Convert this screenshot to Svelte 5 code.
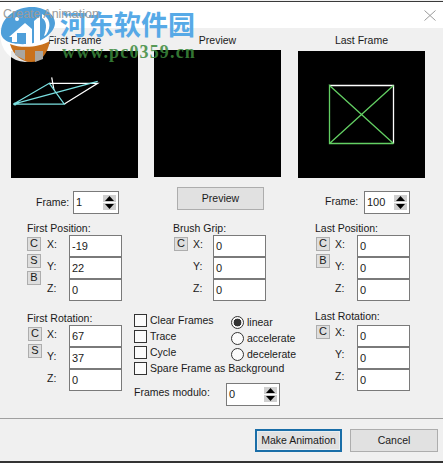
{#snippet spin(value, cls = '')}
  <div class="spin {cls}">
    <span class="spin-val">{value}</span>
    <span class="arrows">
      <span class="arrow"><svg width="9" height="5" viewBox="0 0 9 5"><path d="M4.5 0 9 5H0z" fill="#000" /></svg></span>
      <span class="arrow"><svg width="9" height="5" viewBox="0 0 9 5"><path d="M0 0h9L4.5 5z" fill="#000" /></svg></span>
    </span>
  </div>
{/snippet}

{#snippet group(title, buttons, values, cls = '')}
  <div class="group {cls}">
    <div class="group-title">{title}</div>
    <div class="group-body">
      <div class="btn-stack">
        {#each buttons as b}<span class="mini">{b}</span>{/each}
      </div>
      <div class="axes">
        {#each ['X', 'Y', 'Z'] as a}<span class="axis">{a}:</span>{/each}
      </div>
      <div class="fields">
        {#each values as v}<div class="field">{v}</div>{/each}
      </div>
    </div>
  </div>
{/snippet}

<div class="win">
  <header class="titlebar">
    <span class="title">Create Animation</span>
    <svg class="close" width="12" height="11" viewBox="0 0 12 11"><path d="M.5.5l11 10M11.5.5l-11 10" stroke="#9a9a9a" fill="none" /></svg>
  </header>

  <main class="body">
    <section class="previews">
      <figure class="frame">
        <figcaption>First Frame</figcaption>
        <svg class="canvas" width="127" height="127" viewBox="0 0 127 127">
          <rect width="127" height="127" fill="#000" />
          <g fill="none" stroke-width="1.2">
            <path d="M40.7 26.3 43 39" stroke="#fff" />
            <path d="M38.3 32.3H86.7L53.3 53" stroke="#fff" />
            <path d="M2.3 53.3 38.3 32.3 53.3 53.2H2.3L86.7 30.3" stroke="#7adfe0" />
          </g>
          <circle cx="4" cy="53" r="1.5" fill="#7adfe0" />
        </svg>
      </figure>
      <figure class="frame mid">
        <figcaption>Preview</figcaption>
        <div class="canvas blank"></div>
      </figure>
      <figure class="frame">
        <figcaption>Last Frame</figcaption>
        <svg class="canvas" width="127" height="127" viewBox="0 0 127 127">
          <rect width="127" height="127" fill="#000" />
          <g fill="none" stroke-width="1.3">
            <path d="M31.5 34.5H95.5V92.5" stroke="#fff" />
            <path d="M95.5 92.5H31.5V34.5L95.5 92.5M31.5 92.5 95.5 34.5" stroke="#63cf63" />
          </g>
        </svg>
      </figure>
    </section>

    <section class="frame-row">
      <div class="frame-field">
        <span class="frame-label">Frame:</span>
        {@render spin('1')}
      </div>
      <button class="push preview-btn">Preview</button>
      <div class="frame-field last">
        <span class="frame-label">Frame:</span>
        {@render spin('100')}
      </div>
    </section>

    <section class="positions">
      {@render group('First Position:', ['C', 'S', 'B'], ['-19', '22', '0'])}
      {@render group('Brush Grip:', ['C'], ['0', '0', '0'], 'brush')}
      {@render group('Last Position:', ['C', 'B'], ['0', '0', '0'], 'indent')}
    </section>

    <section class="rotations">
      {@render group('First Rotation:', ['C', 'S'], ['67', '37', '0'], 'rot indent')}
      <div class="options">
        <div class="option-grid">
          <label class="opt"><span class="check"></span>Clear Frames</label>
          <label class="opt radio-opt"><span class="radio on"></span>linear</label>
          <label class="opt"><span class="check"></span>Trace</label>
          <label class="opt radio-opt"><span class="radio"></span>accelerate</label>
          <label class="opt"><span class="check"></span>Cycle</label>
          <label class="opt radio-opt"><span class="radio"></span>decelerate</label>
          <label class="opt wide"><span class="check"></span>Spare Frame as Background</label>
        </div>
        <div class="modulo">
          <span class="modulo-label">Frames modulo:</span>
          {@render spin('0', 'mod')}
        </div>
      </div>
      {@render group('Last Rotation:', ['C'], ['0', '0', '0'], 'rot last-rot indent')}
    </section>
  </main>

  <footer class="footer">
    <button class="push default">Make Animation</button>
    <button class="push">Cancel</button>
  </footer>

  <div class="watermark">
    <svg class="logo" width="60" height="64" viewBox="0 0 60 64">
      <ellipse cx="25" cy="34" rx="25" ry="28" fill="#fff" opacity=".9" />
      <path d="M10 44C13 55 22 62 31 62 41 62 47 55 50 41 40 47 22 49 10 44Z" fill="#c9711c" />
      <path d="M15 50h10v10l-10-5zM35 51h8v8l-8 3z" fill="#a9a6a2" />
      <path d="M1 31C2 17 16 7 32 7 44 7 55 14 55 23 55 32 42 43 27 44 12 45 0 41 1 31Z" fill="#4f9fd9" />
      <path d="M9 37 25 23 32 29V44H26V33H17V42H12V37Z" fill="#fff" />
      <path d="M34 21 40 16V44H34Z" fill="#fff" />
      <path d="M42 14C50 18 52 26 46 35L44 36C47 28 47 21 42 18Z" fill="#fff" />
      <circle cx="17" cy="19" r="2" fill="#fff" />
    </svg>
    <div class="wm-cn">河东软件园</div>
    <div class="wm-url">www.pc0359.cn</div>
  </div>
</div>

<style>
  :global(body) {
    margin: 0;
    background: #fff;
  }
  .win {
    position: relative;
    width: 443px;
    height: 463px;
    overflow: hidden;
    display: flex;
    flex-direction: column;
    background: #f0f0f0;
    font: 10.5px/13px "Liberation Sans", Arial, sans-serif;
    color: #1a1a1a;
  }
  .titlebar {
    box-sizing: border-box;
    height: 27px;
    flex: none;
    display: flex;
    align-items: center;
    justify-content: space-between;
    padding: 0 7px 0 3px;
    margin-top: 1px;
    margin-bottom: -1px;
    background: #fff;
    border-top: 1px solid #3a3a3a;
  }
  .title {
    position: relative;
    z-index: 2;
    color: #9b9b9b;
    font-size: 12.5px;
    margin-top: -1px;
  }
  .body {
    flex: 1;
    display: flex;
    flex-direction: column;
  }
  .previews {
    display: flex;
    padding-left: 11px;
    gap: 16px;
  }
  .frame {
    margin: 0;
    width: 127px;
  }
  .frame.mid {
    margin-top: -1px;
    margin-right: 1px;
  }
  .frame figcaption {
    height: 24px;
    line-height: 26px;
    text-align: center;
  }
  .frame.mid figcaption {
    line-height: 28px;
  }
  .canvas {
    display: block;
    width: 127px;
    height: 127px;
  }
  .blank {
    background: #000;
  }
  .frame-row {
    display: grid;
    grid-template-columns: 141px 148px auto;
    padding-left: 36px;
    margin-top: 13px;
    height: 23px;
  }
  .frame-field {
    display: flex;
    align-items: center;
  }
  .frame-label {
    width: 37px;
  }
  .frame-field.last .frame-label {
    width: 39px;
    margin-top: -2px;
  }
  .preview-btn {
    margin-top: -4px;
  }
  .spin {
    box-sizing: border-box;
    width: 46px;
    height: 23px;
    display: flex;
    justify-content: space-between;
    align-items: center;
    background: #fff;
    border: 1px solid #7a7a7a;
    padding: 0 2px;
    font-size: 11px;
  }
  .spin.mod {
    width: 54px;
  }
  .arrows {
    display: flex;
    flex-direction: column;
    gap: 1px;
  }
  .arrow {
    width: 13px;
    height: 7px;
    background: #cfcfcf;
    display: flex;
    align-items: center;
    justify-content: center;
  }
  .arrow svg {
    display: block;
  }
  .positions {
    display: grid;
    grid-template-columns: 146px 142px auto;
    padding-left: 27px;
    height: 87px;
    align-items: start;
  }
  .rotations {
    display: grid;
    grid-template-columns: 107px 181px auto;
    padding-left: 27px;
  }
  .group-title {
    height: 21px;
    display: flex;
    align-items: flex-end;
    white-space: nowrap;
  }
  .rot .group-title {
    height: 24px;
  }
  .last-rot .group-title {
    height: 26px;
    margin-top: -2px;
    padding-bottom: 2px;
    box-sizing: border-box;
  }
  .group-body {
    display: flex;
  }
  .btn-stack {
    width: 20px;
    display: flex;
    flex-direction: column;
    gap: 3px;
    padding-top: 2px;
    box-sizing: border-box;
  }
  .indent .btn-stack,
  .brush .btn-stack {
    padding-left: 1px;
  }
  .last-rot .btn-stack {
    padding-top: 0;
  }
  .mini {
    box-sizing: border-box;
    width: 14px;
    height: 14px;
    background: #dedede;
    border: 1px solid #adadad;
    text-align: center;
    font-size: 11px;
    line-height: 11px;
  }
  .axes {
    width: 22px;
    display: flex;
    flex-direction: column;
  }
  .brush .axes {
    width: 20px;
  }
  .axis {
    height: 22px;
    line-height: 19px;
  }
  .last-rot .axis {
    line-height: 15px;
  }
  .field {
    box-sizing: border-box;
    width: 53px;
    height: 22px;
    background: #fff;
    border: 1px solid #7a7a7a;
    padding-left: 2px;
    font-size: 11px;
    line-height: 21px;
  }
  .options {
    padding-top: 11px;
  }
  .option-grid {
    display: grid;
    grid-template-columns: 97px auto;
    grid-auto-rows: 16px;
  }
  .opt {
    display: flex;
    align-items: center;
    gap: 3px;
    white-space: nowrap;
  }
  .radio-opt {
    margin-top: 2px;
    height: 16px;
  }
  .wide {
    grid-column: 1 / 3;
  }
  .check {
    box-sizing: border-box;
    width: 13px;
    height: 13px;
    border: 1px solid #333;
    background: #fbfbfb;
  }
  .radio {
    box-sizing: border-box;
    width: 13px;
    height: 13px;
    border: 1px solid #333;
    border-radius: 50%;
    background: #fbfbfb;
    display: block;
  }
  .radio.on {
    background: radial-gradient(circle, #333 0 3.6px, #fbfbfb 4.2px);
  }
  .modulo {
    display: flex;
    align-items: center;
    margin-top: 7px;
  }
  .modulo-label {
    width: 92px;
    margin-top: -4px;
  }
  .footer {
    flex: none;
    box-sizing: border-box;
    height: 45px;
    display: flex;
    justify-content: flex-end;
    gap: 8px;
    padding: 10px 5px 0 0;
    border-top: 1px solid #a0a0a0;
    border-bottom: 2px solid #333;
  }
  .push {
    box-sizing: border-box;
    width: 87px;
    height: 23px;
    padding: 0;
    background: #e1e1e1;
    border: 1px solid #adadad;
    font: inherit;
    color: #1a1a1a;
  }
  .footer .push:last-child {
    width: 88px;
  }
  .push.default {
    border: 2px solid #1a6ea8;
    box-shadow: inset 0 0 0 1px #e8eef2;
  }
  .watermark {
    position: absolute;
    inset: 0;
    z-index: 1;
    pointer-events: none;
  }
  .logo {
    position: absolute;
    left: 0;
    top: 0;
  }
  .wm-cn {
    position: absolute;
    left: 60px;
    top: 8px;
    font: 700 27px/32px "Noto Sans CJK SC", sans-serif;
    color: #4fa6e6;
    opacity: 0.95;
    white-space: nowrap;
  }
  .wm-url {
    position: absolute;
    left: 62px;
    top: 42px;
    font: 700 18px/20px "Liberation Serif", serif;
    letter-spacing: 1.15px;
    color: #3c8a3c;
    opacity: 0.85;
    white-space: nowrap;
  }
</style>
